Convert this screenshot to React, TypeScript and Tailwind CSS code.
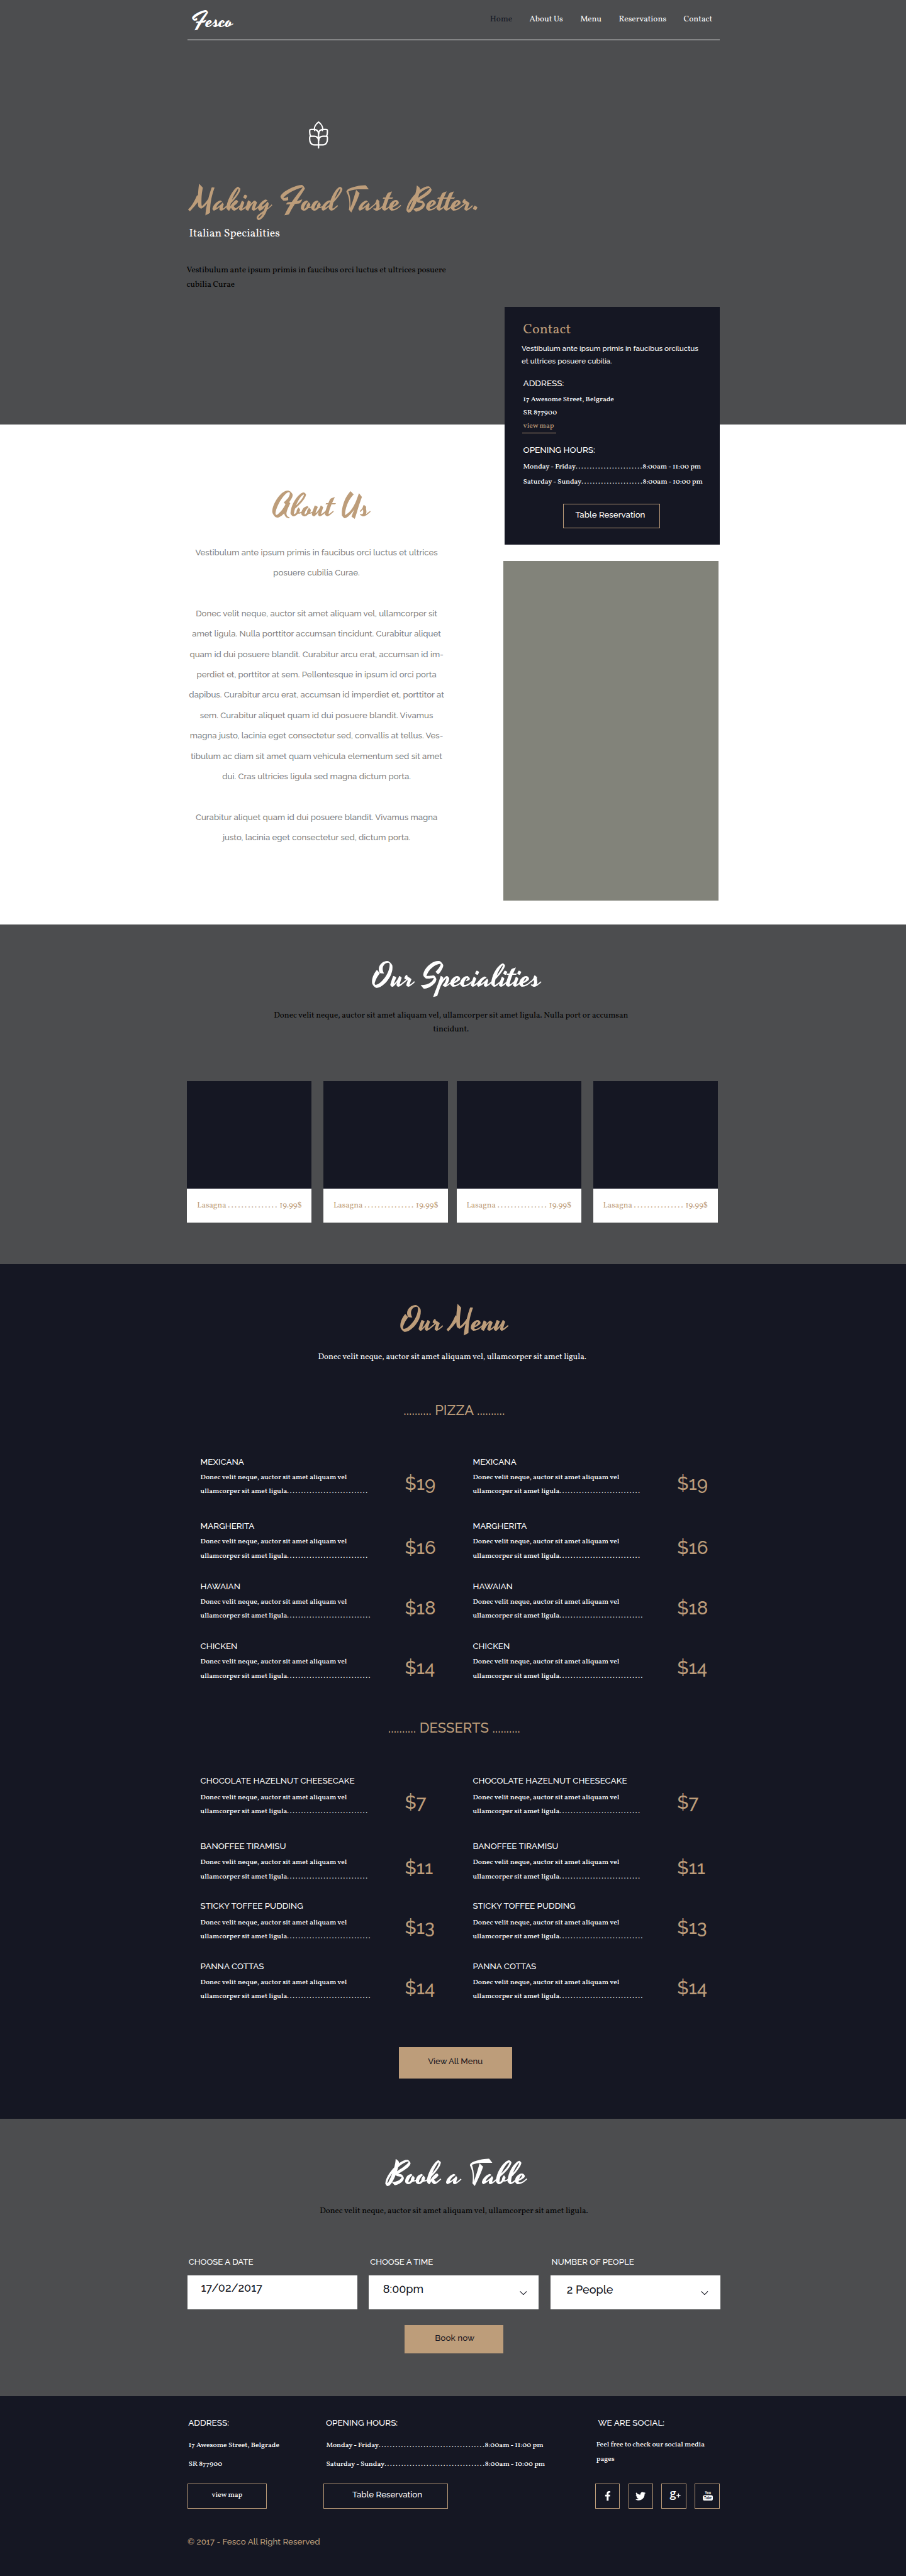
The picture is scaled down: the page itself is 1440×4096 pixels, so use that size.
import type { ReactNode } from "react";
import { FaFacebookF, FaTwitter } from "react-icons/fa";

type MenuEntry = { name: string; price: string; dots: number };

const pizzas: MenuEntry[] = [
  { name: "MEXICANA", price: "$19", dots: 29 },
  { name: "MARGHERITA", price: "$16", dots: 29 },
  { name: "HAWAIAN", price: "$18", dots: 30 },
  { name: "CHICKEN", price: "$14", dots: 30 },
];

const desserts: MenuEntry[] = [
  { name: "CHOCOLATE HAZELNUT CHEESECAKE", price: "$7", dots: 29 },
  { name: "BANOFFEE TIRAMISU", price: "$11", dots: 29 },
  { name: "STICKY TOFFEE PUDDING", price: "$13", dots: 30 },
  { name: "PANNA COTTAS", price: "$14", dots: 30 },
];

function Dots({ count }: { count: number }) {
  return <span className="font-normal tracking-[0.95px]">{".".repeat(count)}</span>;
}

function ScriptTitle({ children, className }: { children: ReactNode; className: string }) {
  return (
    <h2
      className={`font-[Yesteryear,'Liberation_Serif',cursive] text-[56.2px] leading-[70px] whitespace-nowrap ${className}`}
    >
      {children}
    </h2>
  );
}

function WheatIcon() {
  return (
    <svg
      viewBox="0 0 34 48"
      className="h-12 w-[34px]"
      fill="none"
      stroke="white"
      strokeWidth="2.4"
      strokeLinecap="round"
      strokeLinejoin="round"
    >
      <path d="M10.2 16.2C8.4 10.2 12.4 4.4 17 1.2c4.6 3.2 8.600 9 6.800 15" />
      <path d="M17 19v28" />
      <path d="M17 21.500c-.6-4.600-3.600-7.200-7.800-7.200H3.400c-1.100 0-1.800.5-1.900 1.500-.4 3.900.1 7.600 1.400 10.700" />
      <path d="M17 21.500c.6-4.600 3.600-7.200 7.800-7.200h5.800c1.100 0 1.800.5 1.900 1.500.4 3.900-.1 7.600-1.400 10.700" />
      <path d="M17 33.500c-.6-4.600-3.600-7.200-7.800-7.200H3.400c-1.100 0-1.800.5-1.900 1.500C.5 36.500 3.500 41.500 9.800 41.500H17" />
      <path d="M17 33.500c.6-4.600 3.600-7.200 7.800-7.200h5.800c1.100 0 1.800.5 1.900 1.500 1 8.700-2 13.700-8.300 13.700H17" />
    </svg>
  );
}

function Chevron() {
  return (
    <svg viewBox="0 0 13 7" className="h-[7px] w-[13px]" fill="none" stroke="#151723" strokeWidth="1.3">
      <path d="M0.700 0.500 6.500 6.200 12.300 0.500" />
    </svg>
  );
}

function GooglePlusIcon() {
  return (
    <svg viewBox="0 0 20 20" className="h-5 w-5 overflow-visible" fill="white">
      <text x="0.500" y="12.500" fontSize="20" fontWeight="600" fontFamily="'Open Sans', sans-serif">
        g
      </text>
      <path d="M15.100 5.300h1.700v2.800h2.700v1.600h-2.700v2.900h-1.700V9.700h-2.700V8.100h2.700z" />
    </svg>
  );
}

function YouTubeIcon() {
  return (
    <svg
      viewBox="0 0 18 18"
      className="h-[18px] w-[18px] overflow-visible"
      fontFamily="'Open Sans', sans-serif"
      fontWeight="700"
    >
      <text x="3.800" y="7.200" fontSize="8.500" fill="white" textLength="10.600" lengthAdjust="spacingAndGlyphs">
        You
      </text>
      <rect x="0.200" y="8.300" width="17.600" height="9.500" rx="3.200" fill="white" />
      <text x="2.400" y="16" fontSize="8" fill="#151723" textLength="13.200" lengthAdjust="spacingAndGlyphs">
        Tube
      </text>
    </svg>
  );
}

function MenuItem({ item, gap }: { item: MenuEntry; gap: string }) {
  return (
    <div className="flex">
      <div className="w-[361px] shrink-0">
        <h4 className="font-[Raleway,Lato,sans-serif] text-[14.9px] leading-5 font-medium whitespace-nowrap text-white">
          {item.name}
        </h4>
        <p
          className={`font-[Vollkorn,'Liberation_Serif',serif] text-[12.7px] leading-[25px] font-medium whitespace-nowrap text-white ${gap}`}
        >
          Donec velit neque, auctor sit amet aliquam vel
          <br />
          ullamcorper sit amet ligula
          <Dots count={item.dots} />
        </p>
      </div>
      <span className="pt-[29px] font-[Raleway,Lato,sans-serif] text-[32.6px] leading-10 font-medium text-[#bd9d7a]">
        {item.price}
      </span>
    </div>
  );
}

function MenuGroup({
  title,
  items,
  rows,
  gap,
  className,
}: {
  title: string;
  items: MenuEntry[];
  rows: string;
  gap: string;
  className: string;
}) {
  return (
    <div className={className}>
      <h3 className="pl-0.5 text-center font-[Raleway,Lato,sans-serif] text-[24.4px] leading-8 font-medium text-[#bd9d7a]">
        .......... {title} ..........
      </h3>
      <div className={`ml-[23px] grid grid-cols-[481px_auto] ${rows}`}>
        {items.flatMap((item) => [
          <MenuItem key={`${item.name}-l`} item={item} gap={gap} />,
          <MenuItem key={`${item.name}-r`} item={item} gap={gap} />,
        ])}
      </div>
    </div>
  );
}

function SpecialCard({ pad }: { pad: string }) {
  return (
    <article className="w-[220px] bg-white">
      <div className="h-[190px] bg-[#151723]" />
      <div
        className={`flex h-[60px] gap-[3px] pt-5 font-[Vollkorn,'Liberation_Serif',serif] text-[14.4px] leading-5 whitespace-nowrap text-[#bd9d7a] ${pad}`}
      >
        <span>Lasagna</span>
        <span className="tracking-[1.4px]">...............</span>
        <span>19.99$</span>
      </div>
    </article>
  );
}

function Field({
  label,
  value,
  pad,
  arrow,
}: {
  label: string;
  value: string;
  pad: string;
  arrow?: boolean;
}) {
  return (
    <div className="w-[300px] font-[Raleway,Lato,sans-serif] font-medium">
      <span className="block pl-[2px] text-[14.7px] leading-5 text-white">{label}</span>
      <div className="mt-[13px] flex h-[60px] justify-between bg-white pr-[21px]">
        <span className={`text-[20px] leading-7 text-[#151723] ${pad}`}>{value}</span>
        {arrow && (
          <span className="pt-7">
            <Chevron />
          </span>
        )}
      </div>
    </div>
  );
}

function Header() {
  const links = ["About Us", "Menu", "Reservations", "Contact"];
  return (
    <header className="flex h-[71px] justify-between border-b border-white">
      <span className="pt-[18px] pl-[7px] font-[Yesteryear,'Liberation_Serif',cursive] text-[36.7px] leading-10 text-white">
        Fesco
      </span>
      <nav className="flex gap-[30.5px] pt-[22px] pr-[13px] font-[Vollkorn,'Liberation_Serif',serif] text-[14.8px] leading-6 text-white">
        <a className="text-[#151723]">Home</a>
        {links.map((link) => (
          <a key={link}>{link}</a>
        ))}
      </nav>
    </header>
  );
}

function ContactCard() {
  return (
    <div className="ml-0.5 h-[420px] w-[380px] bg-[#151723] pt-[26px] pl-[33px] font-[Vollkorn,'Liberation_Serif',serif] text-[12.7px] font-medium whitespace-nowrap text-white">
      <h3 className="text-[24.5px] leading-8 font-normal text-[#bd9d7a]">Contact</h3>
      <p className="mt-1.5 -ml-[3px] font-[Raleway,Lato,sans-serif] text-[13px] leading-[22px]">
        Vestibulum ante ipsum primis in faucibus orciluctus
        <br />
        et ultrices posuere cubilia.
      </p>
      <h4 className="mt-[17px] font-[Raleway,Lato,sans-serif] text-[15px] leading-5">ADDRESS:</h4>
      <p className="mt-2 leading-[23px]">
        17 Awesome Street, Belgrade
        <br />
        SR 877900
      </p>
      <a className="-ml-0.5 block w-[60px] border-b border-[#bd9d7a] pl-0.5 leading-[23px] text-[#bd9d7a]">
        view map
      </a>
      <h4 className="mt-[19px] font-[Raleway,Lato,sans-serif] text-[15px] leading-5">OPENING HOURS:</h4>
      <p className="mt-[7px] leading-[27px]">
        Monday - Friday
        <Dots count={24} />
        8:00am - 11:00 pm
        <br />
        Saturday - Sunday
        <Dots count={22} />
        8:00am - 10:00 pm
      </p>
      <button className="mt-[25px] ml-[71px] block h-[43px] w-[171px] border border-[#bd9d7a] pl-5 text-left font-[Raleway,Lato,sans-serif] text-[14.8px] leading-5">
        <span className="block pb-1.5">Table Reservation</span>
      </button>
    </div>
  );
}

export default function App() {
  return (
    <div className="h-[4551px] w-[1600px] overflow-hidden bg-white [zoom:0.9]">
      <section className="h-[750px] bg-[#4c4d4f]">
        <div className="ml-[331px] w-[940px]">
          <Header />
          <div className="mt-36 ml-[215px]">
            <WheatIcon />
          </div>
          <ScriptTitle className="mt-[59px] pl-2 text-[#bd9d7a]">Making Food Taste Better.</ScriptTitle>
          <p className="mt-[9px] pl-[3px] font-[Vollkorn,'Liberation_Serif',serif] text-[19.8px] leading-6 text-white">
            Italian Specialities
          </p>
          <p className="mt-[41px] -ml-[1.5px] font-[Vollkorn,'Liberation_Serif',serif] text-[14.75px] leading-[25px] text-black">
            Vestibulum ante ipsum primis in faucibus orci luctus et ultrices posuere
            <br />
            cubilia Curae
          </p>
        </div>
      </section>

      <section className="ml-[331px] flex h-[883px] w-[940px]">
        <div className="w-[456px] pt-28 text-center">
          <ScriptTitle className="pl-[18px] text-[#bd9d7a]">About Us</ScriptTitle>
          <p className="mt-[26.5px] font-[Raleway,Lato,sans-serif] text-[14.67px] leading-9 font-medium whitespace-nowrap text-[#7f7f7f]">
            Vestibulum ante ipsum primis in faucibus orci luctus et ultrices
            <br />
            posuere cubilia Curae.
            <br />
            <br />
            Donec velit neque, auctor sit amet aliquam vel, ullamcorper sit
            <br />
            amet ligula. Nulla porttitor accumsan tincidunt. Curabitur aliquet
            <br />
            quam id dui posuere blandit. Curabitur arcu erat, accumsan id im-
            <br />
            perdiet et, porttitor at sem. Pellentesque in ipsum id orci porta
            <br />
            dapibus. Curabitur arcu erat, accumsan id imperdiet et, porttitor at
            <br />
            sem. Curabitur aliquet quam id dui posuere blandit. Vivamus
            <br />
            magna justo, lacinia eget consectetur sed, convallis at tellus. Ves-
            <br />
            tibulum ac diam sit amet quam vehicula elementum sed sit amet
            <br />
            dui. Cras ultricies ligula sed magna dictum porta.
            <br />
            <br />
            Curabitur aliquet quam id dui posuere blandit. Vivamus magna
            <br />
            justo, lacinia eget consectetur sed, dictum porta.
          </p>
        </div>
        <aside className="relative -mt-52 ml-[102px]">
          <ContactCard />
          <div className="mt-[29px] h-[600px] w-[380px] bg-[#82837a]" />
        </aside>
      </section>

      <section className="h-[600px] bg-[#4c4d4f] pt-[60px]">
        <div className="ml-[331px] w-[940px]">
          <ScriptTitle className="pl-3 text-center text-white">Our Specialities</ScriptTitle>
          <p className="mt-[19px] pr-[9px] text-center font-[Vollkorn,'Liberation_Serif',serif] text-[14.63px] leading-[25px] whitespace-nowrap text-black">
            Donec velit neque, auctor sit amet aliquam vel, ullamcorper sit amet ligula. Nulla port or accumsan
            <br />
            tincidunt.
          </p>
          <div className="mt-[78px] -ml-px flex gap-4">
            <div className="flex gap-[21px]">
              <SpecialCard pad="pl-[18px]" />
              <SpecialCard pad="pl-[18px]" />
            </div>
            <div className="flex gap-[21px]">
              <SpecialCard pad="pl-[17px]" />
              <SpecialCard pad="pl-[17px]" />
            </div>
          </div>
        </div>
      </section>

      <section className="h-[1510px] bg-[#151723] pt-[68px]">
        <div className="ml-[331px] w-[940px]">
          <ScriptTitle className="pl-1 text-center text-[#bd9d7a]">Our Menu</ScriptTitle>
          <p className="mt-[15px] pr-[5px] text-center font-[Vollkorn,'Liberation_Serif',serif] text-[14.63px] leading-[25px] text-white">
            Donec velit neque, auctor sit amet aliquam vel, ullamcorper sit amet ligula.
          </p>
          <MenuGroup
            className="mt-[65px]"
            title="PIZZA"
            items={pizzas}
            rows="mt-16 grid-rows-[114px_106px_106px_81px]"
            gap="mt-[5.5px]"
          />
          <MenuGroup
            className="mt-[58px]"
            title="DESSERTS"
            items={desserts}
            rows="mt-[67px] grid-rows-[115px_106px_106px_80px]"
            gap="mt-[7px]"
          />
          <button className="mt-[74px] ml-[373px] flex h-[55px] w-[200px] justify-center bg-[#bd9d7a] pt-[15px] font-[Raleway,Lato,sans-serif] text-[14.6px] leading-5 font-medium text-[#151723]">
            View All Menu
          </button>
        </div>
      </section>

      <section className="h-[490px] bg-[#4c4d4f] pt-[66px]">
        <div className="ml-[331px] w-[941px]">
          <ScriptTitle className="pl-3 text-center text-white">Book a Table</ScriptTitle>
          <p className="mt-4 text-center font-[Vollkorn,'Liberation_Serif',serif] text-[14.63px] leading-[25px] text-black">
            Donec velit neque, auctor sit amet aliquam vel, ullamcorper sit amet ligula.
          </p>
          <div className="mt-[67px] flex justify-between">
            <Field label="CHOOSE A DATE" value="17/02/2017" pad="pl-6 pt-2" />
            <Field label="CHOOSE A TIME" value="8:00pm" pad="pl-[25px] pt-[9.5px]" arrow />
            <Field label="NUMBER OF PEOPLE" value="2 People" pad="pl-[29px] pt-[11.5px]" arrow />
          </div>
          <button className="mt-7 ml-[383px] flex h-[50px] w-[175px] justify-center bg-[#bd9d7a] pt-3 pl-[3px] font-[Raleway,Lato,sans-serif] text-[15px] leading-5 font-medium text-[#151723]">
            Book now
          </button>
        </div>
      </section>

      <footer className="h-[318px] bg-[#151723] pt-[37px]">
        <div className="ml-[331px] w-[940px] font-[Vollkorn,'Liberation_Serif',serif] text-[12.7px] font-medium whitespace-nowrap text-white">
          <div className="flex">
            <div className="w-60">
              <h4 className="pl-[1.5px] font-[Raleway,Lato,sans-serif] text-[15px] leading-5">ADDRESS:</h4>
              <p className="mt-[13px] pl-0.5 leading-[34px]">
                17 Awesome Street, Belgrade
                <br />
                SR 877900
              </p>
              <button className="mt-[17px] flex h-11 w-[140px] justify-center border border-[#bd9d7a] pt-[9px] leading-5">
                view map
              </button>
            </div>
            <div className="w-[480px]">
              <h4 className="pl-[4.5px] font-[Raleway,Lato,sans-serif] text-[15px] leading-5">OPENING HOURS:</h4>
              <p className="mt-[13px] pl-[5px] leading-[34px]">
                Monday - Friday
                <Dots count={38} />
                8:00am - 11:00 pm
                <br />
                Saturday - Sunday
                <Dots count={36} />
                8:00am - 10:00 pm
              </p>
              <button className="mt-[17px] flex h-11 w-[220px] justify-center border border-[#bd9d7a] pt-2 pl-1.5 font-[Raleway,Lato,sans-serif] text-[14.8px] leading-5">
                Table Reservation
              </button>
            </div>
            <div className="w-[220px]">
              <h4 className="pl-[5px] font-[Raleway,Lato,sans-serif] text-[15px] leading-5">WE ARE SOCIAL:</h4>
              <p className="mt-[17px] pl-0.5 leading-[25px]">
                Feel free to check our social media
                <br />
                pages
              </p>
              <div className="mt-[31px] flex justify-between">
                <a className="flex size-11 items-center justify-center border border-[#bd9d7a]">
                  <FaFacebookF className="h-[17px] w-[11px]" />
                </a>
                <a className="flex size-11 items-center justify-center border border-[#bd9d7a]">
                  <FaTwitter className="size-[18px]" />
                </a>
                <a className="flex size-11 items-center justify-center border border-[#bd9d7a] pl-1">
                  <GooglePlusIcon />
                </a>
                <a className="flex size-11 items-center justify-center border border-[#bd9d7a] pb-0.5 pl-[3px]">
                  <YouTubeIcon />
                </a>
              </div>
            </div>
          </div>
          <p className="mt-12 font-[Raleway,Lato,sans-serif] text-[14.9px] leading-5 text-[#bd9d7a]">
            © 2017 - Fesco All Right Reserved
          </p>
        </div>
      </footer>
    </div>
  );
}
